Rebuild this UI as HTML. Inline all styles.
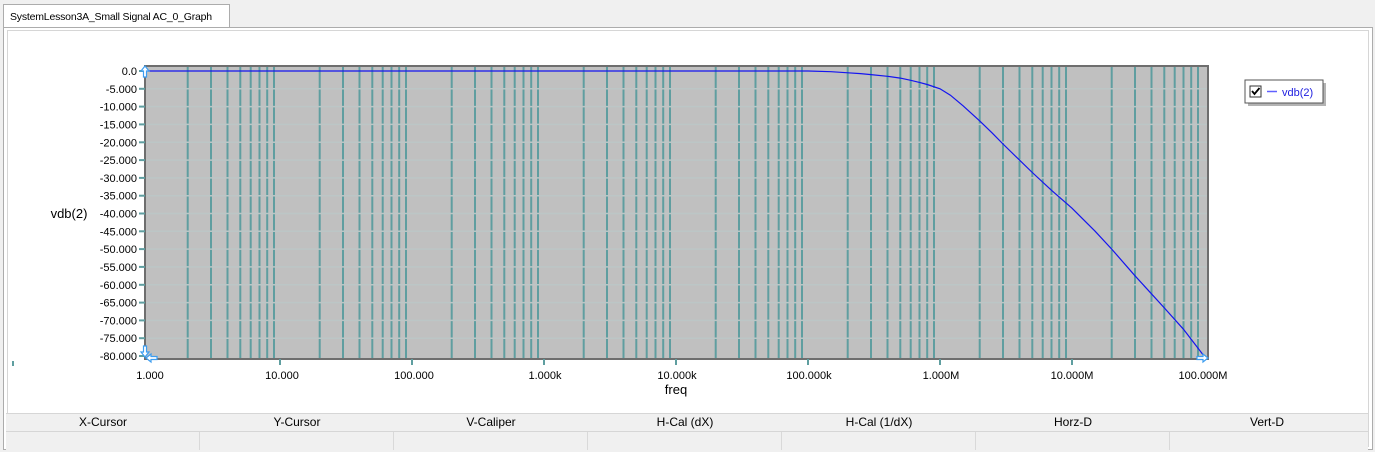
<!DOCTYPE html>
<html><head><meta charset="utf-8"><style>
body{margin:0;width:1375px;height:452px;background:#f0f0f0;font-family:"Liberation Sans",sans-serif;overflow:hidden;position:relative}
.tab{position:absolute;left:3px;top:4px;width:227px;height:24px;background:#fff;border:1px solid #acacac;border-bottom:none;font-size:10.5px;line-height:24px;padding-left:6px;box-sizing:border-box;color:#000;white-space:nowrap;letter-spacing:-0.2px;overflow:hidden}
.panel{position:absolute;left:3px;top:27px;width:1370px;height:423px;background:#fff;border:1px solid #acacac;box-sizing:border-box}
.inner{position:absolute;left:3px;top:2px;width:1362px;height:417px;border:1px solid #d6d6d6;box-sizing:border-box}
.tbl{position:absolute;left:6px;top:413px;width:1362px;font-size:12px;color:#000}
.row{display:flex;height:17px}
.row div{width:194px;text-align:center;line-height:17px;box-sizing:border-box}
.h{background:#f0f0f0;border-top:1px solid #d6d6d6;border-bottom:1px solid #d6d6d6}
.v{background:#f0f0f0;height:18px}
.v div{border-right:1px solid #d9d9d9}
</style></head><body>
<div class="tab">SystemLesson3A_Small Signal AC_0_Graph</div>
<div class="panel"><div class="inner"></div></div>
<svg style="position:absolute;left:0;top:0" width="1375" height="452" font-family="Liberation Sans, sans-serif">
<defs>
<g id="dec">
<line x1="39.7" y1="66" x2="39.7" y2="359"/><line x1="63" y1="66" x2="63" y2="359"/><line x1="79.5" y1="66" x2="79.5" y2="359"/><line x1="92.3" y1="66" x2="92.3" y2="359"/><line x1="102.7" y1="66" x2="102.7" y2="359"/><line x1="111.5" y1="66" x2="111.5" y2="359"/><line x1="119.2" y1="66" x2="119.2" y2="359"/><line x1="126" y1="66" x2="126" y2="359"/>
</g>
</defs>
<rect x="145" y="66" width="1063" height="293" fill="#c0c0c0"/>
<g stroke="#5f9ea0" stroke-width="2" transform="translate(148,0)">
<use href="#dec"/><use href="#dec" transform="translate(132,0)"/><use href="#dec" transform="translate(264,0)"/><use href="#dec" transform="translate(396,0)"/><use href="#dec" transform="translate(528,0)"/><use href="#dec" transform="translate(660,0)"/><use href="#dec" transform="translate(792,0)"/><use href="#dec" transform="translate(924,0)"/>
</g>
<g stroke="#bcc6c6" stroke-width="1.5">
<line x1="146" x2="1207" y1="88.8" y2="88.8"/><line x1="146" x2="1207" y1="106.6" y2="106.6"/><line x1="146" x2="1207" y1="124.4" y2="124.4"/><line x1="146" x2="1207" y1="142.3" y2="142.3"/><line x1="146" x2="1207" y1="160.1" y2="160.1"/><line x1="146" x2="1207" y1="177.9" y2="177.9"/><line x1="146" x2="1207" y1="195.7" y2="195.7"/><line x1="146" x2="1207" y1="213.5" y2="213.5"/><line x1="146" x2="1207" y1="231.3" y2="231.3"/><line x1="146" x2="1207" y1="249.1" y2="249.1"/><line x1="146" x2="1207" y1="266.9" y2="266.9"/><line x1="146" x2="1207" y1="284.8" y2="284.8"/><line x1="146" x2="1207" y1="302.6" y2="302.6"/><line x1="146" x2="1207" y1="320.4" y2="320.4"/><line x1="146" x2="1207" y1="338.2" y2="338.2"/>
</g>
<rect x="145" y="66" width="1063" height="293" fill="none" stroke="#6e6e6e" stroke-width="2"/>
<polyline fill="none" stroke="#1414f0" stroke-width="1.2" points="148,71 808,71 831,71.7 848,72.8 860.5,73.6 871,74.6 887.5,76.3 900.3,78.1 910.7,80.3 919.5,82.4 927.2,84.5 940,88.8 950.4,95.2 963.2,105.9 979.7,120.9 992.5,133.3 1003,144 1019.5,160.1 1032.3,172.5 1051.5,190.3 1072,208.2 1095.2,231.3 1111.7,249.1 1135,275.8 1164.3,307.9 1183.5,329.3 1204,356"/>
<g stroke="#5f9ea0" stroke-width="2">
<line x1="139" x2="145" y1="71" y2="71"/><line x1="139" x2="145" y1="88.8" y2="88.8"/><line x1="139" x2="145" y1="106.6" y2="106.6"/><line x1="139" x2="145" y1="124.4" y2="124.4"/><line x1="139" x2="145" y1="142.3" y2="142.3"/><line x1="139" x2="145" y1="160.1" y2="160.1"/><line x1="139" x2="145" y1="177.9" y2="177.9"/><line x1="139" x2="145" y1="195.7" y2="195.7"/><line x1="139" x2="145" y1="213.5" y2="213.5"/><line x1="139" x2="145" y1="231.3" y2="231.3"/><line x1="139" x2="145" y1="249.1" y2="249.1"/><line x1="139" x2="145" y1="266.9" y2="266.9"/><line x1="139" x2="145" y1="284.8" y2="284.8"/><line x1="139" x2="145" y1="302.6" y2="302.6"/><line x1="139" x2="145" y1="320.4" y2="320.4"/><line x1="139" x2="145" y1="338.2" y2="338.2"/><line x1="139" x2="145" y1="356" y2="356"/>
<line x1="280" x2="280" y1="359" y2="365"/><line x1="412" x2="412" y1="359" y2="365"/><line x1="544" x2="544" y1="359" y2="365"/><line x1="676" x2="676" y1="359" y2="365"/><line x1="808" x2="808" y1="359" y2="365"/><line x1="940" x2="940" y1="359" y2="365"/><line x1="1072" x2="1072" y1="359" y2="365"/>
<line x1="13" x2="13" y1="361" y2="366"/>
</g>
<g font-size="11" text-anchor="end" fill="#000">
<text x="137" y="75">0.0</text><text x="137" y="92.8">-5.000</text><text x="137" y="110.6">-10.000</text><text x="137" y="128.4">-15.000</text><text x="137" y="146.3">-20.000</text><text x="137" y="164.1">-25.000</text><text x="137" y="181.9">-30.000</text><text x="137" y="199.7">-35.000</text><text x="137" y="217.5">-40.000</text><text x="137" y="235.3">-45.000</text><text x="137" y="253.1">-50.000</text><text x="137" y="270.9">-55.000</text><text x="137" y="288.8">-60.000</text><text x="137" y="306.6">-65.000</text><text x="137" y="324.4">-70.000</text><text x="137" y="342.2">-75.000</text><text x="137" y="360">-80.000</text>
</g>
<g font-size="11" text-anchor="middle" fill="#000">
<text x="150" y="379">1.000</text><text x="282" y="379">10.000</text><text x="414" y="379">100.000</text><text x="545" y="379">1.000k</text><text x="677" y="379">10.000k</text><text x="809" y="379">100.000k</text><text x="941" y="379">1.000M</text><text x="1072" y="379">10.000M</text><text x="1203" y="379">100.000M</text>
</g>
<text x="676" y="394" font-size="13" text-anchor="middle">freq</text>
<text x="69" y="218" font-size="13" text-anchor="middle">vdb(2)</text>
<g fill="#fff" stroke="#3d9df0" stroke-width="1.2">
<path d="M145,66 l-4,5 h2.5 v6 h3 v-6 h2.5 z"/>
<path d="M145,357 l-4,-5 h2.5 v-6 h3 v6 h2.5 z"/>
<path d="M146,358 l5,-4 v2.5 h6 v3 h-6 v2.5 z"/>
<path d="M1208,358 l-5,-4 v2.5 h-6 v3 h6 v2.5 z"/>
</g>
<rect x="1248" y="83" width="78" height="23" fill="#808080" opacity="0.6"/>
<rect x="1245" y="80" width="78" height="23" fill="#fff" stroke="#555" stroke-width="1"/>
<rect x="1250" y="86" width="11" height="11" fill="#fff" stroke="#333"/>
<path d="M1252,91 l2.5,3 l5,-6" fill="none" stroke="#000" stroke-width="1.8"/>
<line x1="1267" y1="91.5" x2="1277" y2="91.5" stroke="#6060ff" stroke-width="1.5"/>
<text x="1282" y="96" font-size="11" fill="#2020e0">vdb(2)</text>
</svg>
<div class="tbl">
<div class="row h"><div>X-Cursor</div><div>Y-Cursor</div><div>V-Caliper</div><div>H-Cal (dX)</div><div>H-Cal (1/dX)</div><div>Horz-D</div><div>Vert-D</div></div>
<div class="row v"><div></div><div></div><div></div><div></div><div></div><div></div><div style="border-right:none"></div></div>
</div>
</body></html>
